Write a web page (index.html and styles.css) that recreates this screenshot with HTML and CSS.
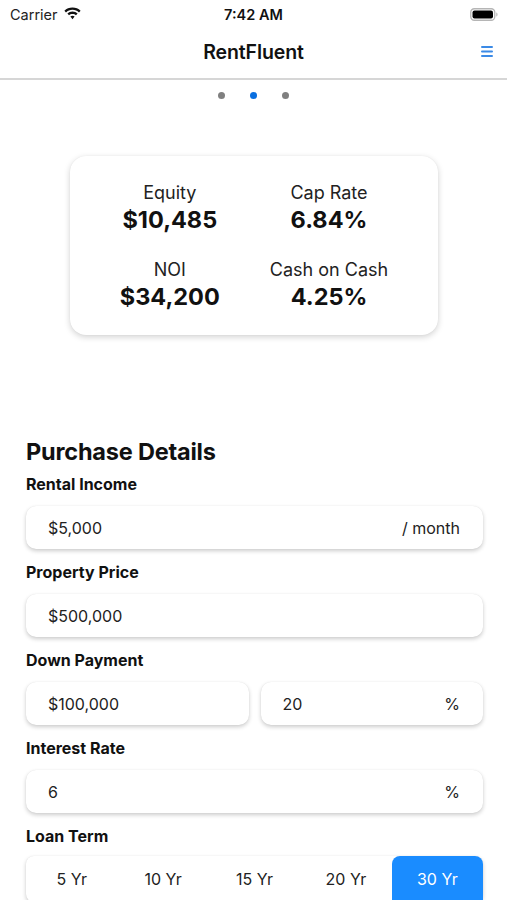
FILE: index.html
```html
<!DOCTYPE html>
<html>
<head>
<meta charset="utf-8">
<link rel="stylesheet" href="styles.css">
</head>
<body>
<div class="status">
  <div class="status-left">
    <span class="carrier">Carrier</span>
    <svg class="wifi" width="17" height="13" viewBox="0 0 17 13">
      <path d="M8.5 0.5C5.3 0.5 2.5 1.7 0.4 3.7L2 5.4C3.7 3.8 6 2.8 8.5 2.8S13.3 3.8 15 5.4L16.6 3.7C14.5 1.7 11.7 0.5 8.5 0.5Z" fill="#111"/>
      <path d="M8.5 4.6C6.5 4.6 4.7 5.4 3.4 6.6L5 8.3C5.9 7.4 7.1 6.9 8.5 6.9S11.1 7.4 12 8.3L13.6 6.6C12.3 5.4 10.5 4.6 8.5 4.6Z" fill="#111"/>
      <path d="M8.5 8.7C7.6 8.7 6.9 9 6.4 9.5L8.5 12.2L10.6 9.5C10.1 9 9.4 8.7 8.5 8.7Z" fill="#111"/>
    </svg>
  </div>
  <div class="time">7:42 AM</div>
  <div class="status-right">
    <svg width="28" height="13" viewBox="0 0 28 13">
      <rect x="0.75" y="0.75" width="24" height="11.5" rx="3.5" fill="none" stroke="#b5b5b5" stroke-width="1.3"/>
      <rect x="2.5" y="2.5" width="20.5" height="8" rx="2" fill="#000"/>
      <path d="M26.3 4.5v4c0.8-0.3 1.2-1 1.2-2s-0.4-1.7-1.2-2z" fill="#b5b5b5"/>
    </svg>
  </div>
</div>

<header class="nav">
  <div class="nav-title">RentFluent</div>
  <svg class="menu" width="14" height="13" viewBox="0 0 14 13">
    <rect x="1" y="1" width="12" height="2" rx="1" fill="#3b8ae6"/>
    <rect x="1" y="5.5" width="12" height="2" rx="1" fill="#3b8ae6"/>
    <rect x="1" y="10" width="12" height="2" rx="1" fill="#3b8ae6"/>
  </svg>
</header>

<div class="dots">
  <span class="dot"></span>
  <span class="dot active"></span>
  <span class="dot"></span>
</div>

<section class="card">
  <div class="stat">
    <div class="stat-label">Equity</div>
    <div class="stat-value">$10,485</div>
  </div>
  <div class="stat">
    <div class="stat-label">Cap Rate</div>
    <div class="stat-value">6.84%</div>
  </div>
  <div class="stat">
    <div class="stat-label">NOI</div>
    <div class="stat-value">$34,200</div>
  </div>
  <div class="stat">
    <div class="stat-label">Cash on Cash</div>
    <div class="stat-value">4.25%</div>
  </div>
</section>

<main class="form">
  <h2 class="heading">Purchase Details</h2>

  <div class="label">Rental Income</div>
  <div class="field"><span>$5,000</span><span class="suffix">/ month</span></div>

  <div class="label">Property Price</div>
  <div class="field"><span>$500,000</span></div>

  <div class="label">Down Payment</div>
  <div class="field-row">
    <div class="field"><span>$100,000</span></div>
    <div class="field"><span>20</span><span class="suffix">%</span></div>
  </div>

  <div class="label">Interest Rate</div>
  <div class="field"><span>6</span><span class="suffix">%</span></div>

  <div class="label">Loan Term</div>
  <div class="segments">
    <div class="seg">5 Yr</div>
    <div class="seg">10 Yr</div>
    <div class="seg">15 Yr</div>
    <div class="seg">20 Yr</div>
    <div class="seg selected">30 Yr</div>
  </div>
</main>
</body>
</html>
```

FILE: styles.css
```css
* { box-sizing: border-box; }
html, body { margin: 0; padding: 0; background: #fff; }
body {
  font-family: Inter, "Noto Sans", "Liberation Sans", sans-serif;
  color: #111;
  width: 507px;
  height: 900px;
  overflow: hidden;
}

.status {
  height: 28px;
  display: flex;
  align-items: center;
  justify-content: space-between;
  padding: 0 9px 0 10px;
  position: relative;
}
.status-left { display: flex; align-items: center; gap: 6px; }
.carrier { font-size: 14.5px; color: #222; }
.wifi { margin-top: -2px; }
.time {
  position: absolute;
  left: 0; right: 0;
  text-align: center;
  font-size: 14.5px;
  font-weight: 600;
  pointer-events: none;
}
.status-right { display: flex; align-items: center; }

.nav {
  height: 52px;
  display: flex;
  align-items: center;
  justify-content: center;
  border-bottom: 2px solid #d6d6d6;
  position: relative;
}
.nav-title { font-size: 19.5px; font-weight: 600; letter-spacing: -0.1px; margin-top: -2px; }
.menu { position: absolute; right: 13px; top: 17px; }

.dots {
  display: flex;
  justify-content: center;
  gap: 25px;
  padding-top: 12px;
  height: 76px;
}
.dot {
  width: 7px; height: 7px;
  border-radius: 50%;
  background: #808080;
}
.dot.active { background: #0a6fe0; }

.card {
  margin: 0 69px 0 70px;
  height: 179px;
  border-radius: 16px;
  background: #fff;
  box-shadow: 0 2px 6px rgba(0,0,0,0.18), 0 0 1px rgba(0,0,0,0.08);
  display: grid;
  grid-template-columns: auto auto;
  justify-content: center;
  column-gap: 50px;
  row-gap: 24px;
  padding-top: 26px;
  align-content: start;
}
.stat { text-align: center; }
.stat-label { font-size: 18px; line-height: 22px; color: #222; }
.stat-value { font-size: 23.5px; line-height: 30px; font-weight: 700; margin-top: 1px; }

.form { padding: 102px 24px 0 26px; }
.heading {
  margin: 0;
  font-size: 23.5px;
  line-height: 30px;
  font-weight: 700;
  letter-spacing: -0.2px;
}
.label {
  font-size: 16px;
  line-height: 22px;
  font-weight: 700;
  margin-top: 6px;
  margin-bottom: 11px;
}
.field + .label, .field-row + .label { margin-top: 12px; }
.field {
  height: 43px;
  border-radius: 10px;
  background: #fff;
  box-shadow: 0 2px 4px rgba(0,0,0,0.2), 0 0 1px rgba(0,0,0,0.1);
  display: flex;
  align-items: center;
  justify-content: space-between;
  padding: 0 23px 0 22px;
  font-size: 16px;
  color: #222;
}
.suffix { color: #222; }
.field-row {
  display: grid;
  grid-template-columns: 1fr 1fr;
  gap: 12px;
}

.segments {
  display: grid;
  grid-template-columns: repeat(5, 1fr);
  height: 46px;
  border-radius: 8px;
  background: #fff;
  box-shadow: 0 2px 4px rgba(0,0,0,0.2), 0 0 1px rgba(0,0,0,0.1);
  margin-top: -2px;
}
.seg {
  display: flex;
  align-items: center;
  justify-content: center;
  font-size: 16px;
  color: #222;
}
.seg.selected {
  background: #1a8cff;
  color: #fff;
  border-radius: 8px 8px 0 0;
}
```
